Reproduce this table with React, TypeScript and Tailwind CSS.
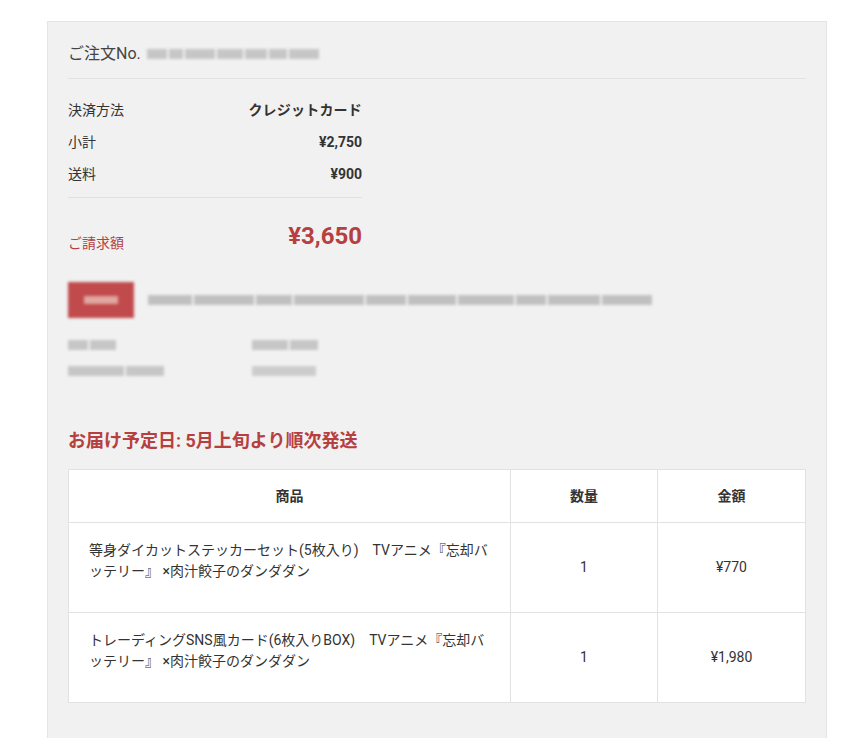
import React from "react";

type Item = {
  name: string;
  qty: number;
  price: string;
};

const ITEMS: Item[] = [
  {
    name: "等身ダイカットステッカーセット(5枚入り)　TVアニメ『忘却バッテリー』 ×肉汁餃子のダンダダン",
    qty: 1,
    price: "¥770",
  },
  {
    name: "トレーディングSNS風カード(6枚入りBOX)　TVアニメ『忘却バッテリー』 ×肉汁餃子のダンダダン",
    qty: 1,
    price: "¥1,980",
  },
];

const FONT = "font-['Roboto','Noto_Sans_CJK_JP',sans-serif]";

// pixelated placeholder for redacted text
function Redacted({ widths, className }: { widths: string[]; className?: string }) {
  return (
    <div className={`flex items-center gap-[2px] blur-[1.5px] ${className ?? ""}`}>
      {widths.map((w, i) => (
        <span key={i} className={`h-[10px] ${w} bg-[#b5b5b5]`} />
      ))}
    </div>
  );
}

export default function App() {
  return (
    <main className={`min-h-[738px] bg-white text-[#333] ${FONT}`}>
      <div className="pl-[47px] pt-[21px]">
        <div className="w-[780px] min-h-[717px] border border-b-0 border-[#e4e4e4] bg-[#f1f1f1] px-[20px]">
          {/* order number */}
          <div className="flex items-center h-[57px] pt-[8px] border-b border-[#e2e2e2]">
            <span className="text-[16px] text-[#444]">ご注文No.</span>
            <Redacted
              className="ml-[6px] opacity-70"
              widths={["w-[20px]", "w-[14px]", "w-[30px]", "w-[26px]", "w-[22px]", "w-[18px]", "w-[30px]"]}
            />
          </div>

          {/* summary */}
          <div className="w-[294px] pt-[15px] text-[14px]">
            <div className="flex justify-between h-[32px] items-center">
              <span>決済方法</span>
              <span className="font-bold tracking-[0.2px]">クレジットカード</span>
            </div>
            <div className="flex justify-between h-[32px] items-center">
              <span>小計</span>
              <span className="font-bold">¥2,750</span>
            </div>
            <div className="flex justify-between h-[32px] items-center">
              <span>送料</span>
              <span className="font-bold">¥900</span>
            </div>
            <div className="border-t border-[#e0e0e0] mt-[7px]" />
            <div className="flex justify-between items-end pt-[22px] text-[#b6403f]">
              <span className="text-[14px] -mb-[2px]">ご請求額</span>
              <span className="text-[24px] font-bold leading-[32px]">¥3,650</span>
            </div>
          </div>

          {/* shipping address (redacted) */}
          <div className="pt-[30px]">
            <div className="flex items-center gap-[14px]">
              <div className="w-[66px] h-[36px] bg-[#c14a4c] blur-[1.5px] flex items-center justify-center">
                <span className="w-[34px] h-[8px] bg-[#e0a6a0]" />
              </div>
              <Redacted
                widths={[
                  "w-[44px]", "w-[60px]", "w-[36px]", "w-[70px]", "w-[40px]", "w-[48px]",
                  "w-[56px]", "w-[30px]", "w-[52px]", "w-[50px]",
                ]}
                className="opacity-80"
              />
            </div>
            <div className="grid grid-cols-[184px_1fr] gap-y-[16px] pt-[22px]">
              <Redacted widths={["w-[20px]", "w-[26px]"]} className="opacity-70" />
              <Redacted widths={["w-[36px]", "w-[28px]"]} className="opacity-70" />
              <Redacted widths={["w-[56px]", "w-[38px]"]} className="opacity-70" />
              <Redacted widths={["w-[64px]"]} className="opacity-60" />
            </div>
          </div>

          {/* delivery */}
          <h2 className="mt-[52px] text-[18px] font-bold text-[#b6403f] leading-[26px]">
            お届け予定日: 5月上旬より順次発送
          </h2>

          <table className="mt-[15px] w-[738px] border-collapse bg-white text-[14px]">
            <thead>
              <tr className="h-[53px]">
                <th className="w-[442px] border border-[#e2e2e2] font-bold">商品</th>
                <th className="w-[147px] border border-[#e2e2e2] font-bold">数量</th>
                <th className="border border-[#e2e2e2] font-bold">金額</th>
              </tr>
            </thead>
            <tbody>
              {ITEMS.map((item) => (
                <tr key={item.name} className="h-[90px]">
                  <td className="border border-[#e2e2e2] px-[20px] pt-[17px] align-top leading-[21px]">
                    {item.name}
                  </td>
                  <td className="border border-[#e2e2e2] text-center">{item.qty}</td>
                  <td className="border border-[#e2e2e2] text-center">{item.price}</td>
                </tr>
              ))}
            </tbody>
          </table>
        </div>
      </div>
    </main>
  );
}
